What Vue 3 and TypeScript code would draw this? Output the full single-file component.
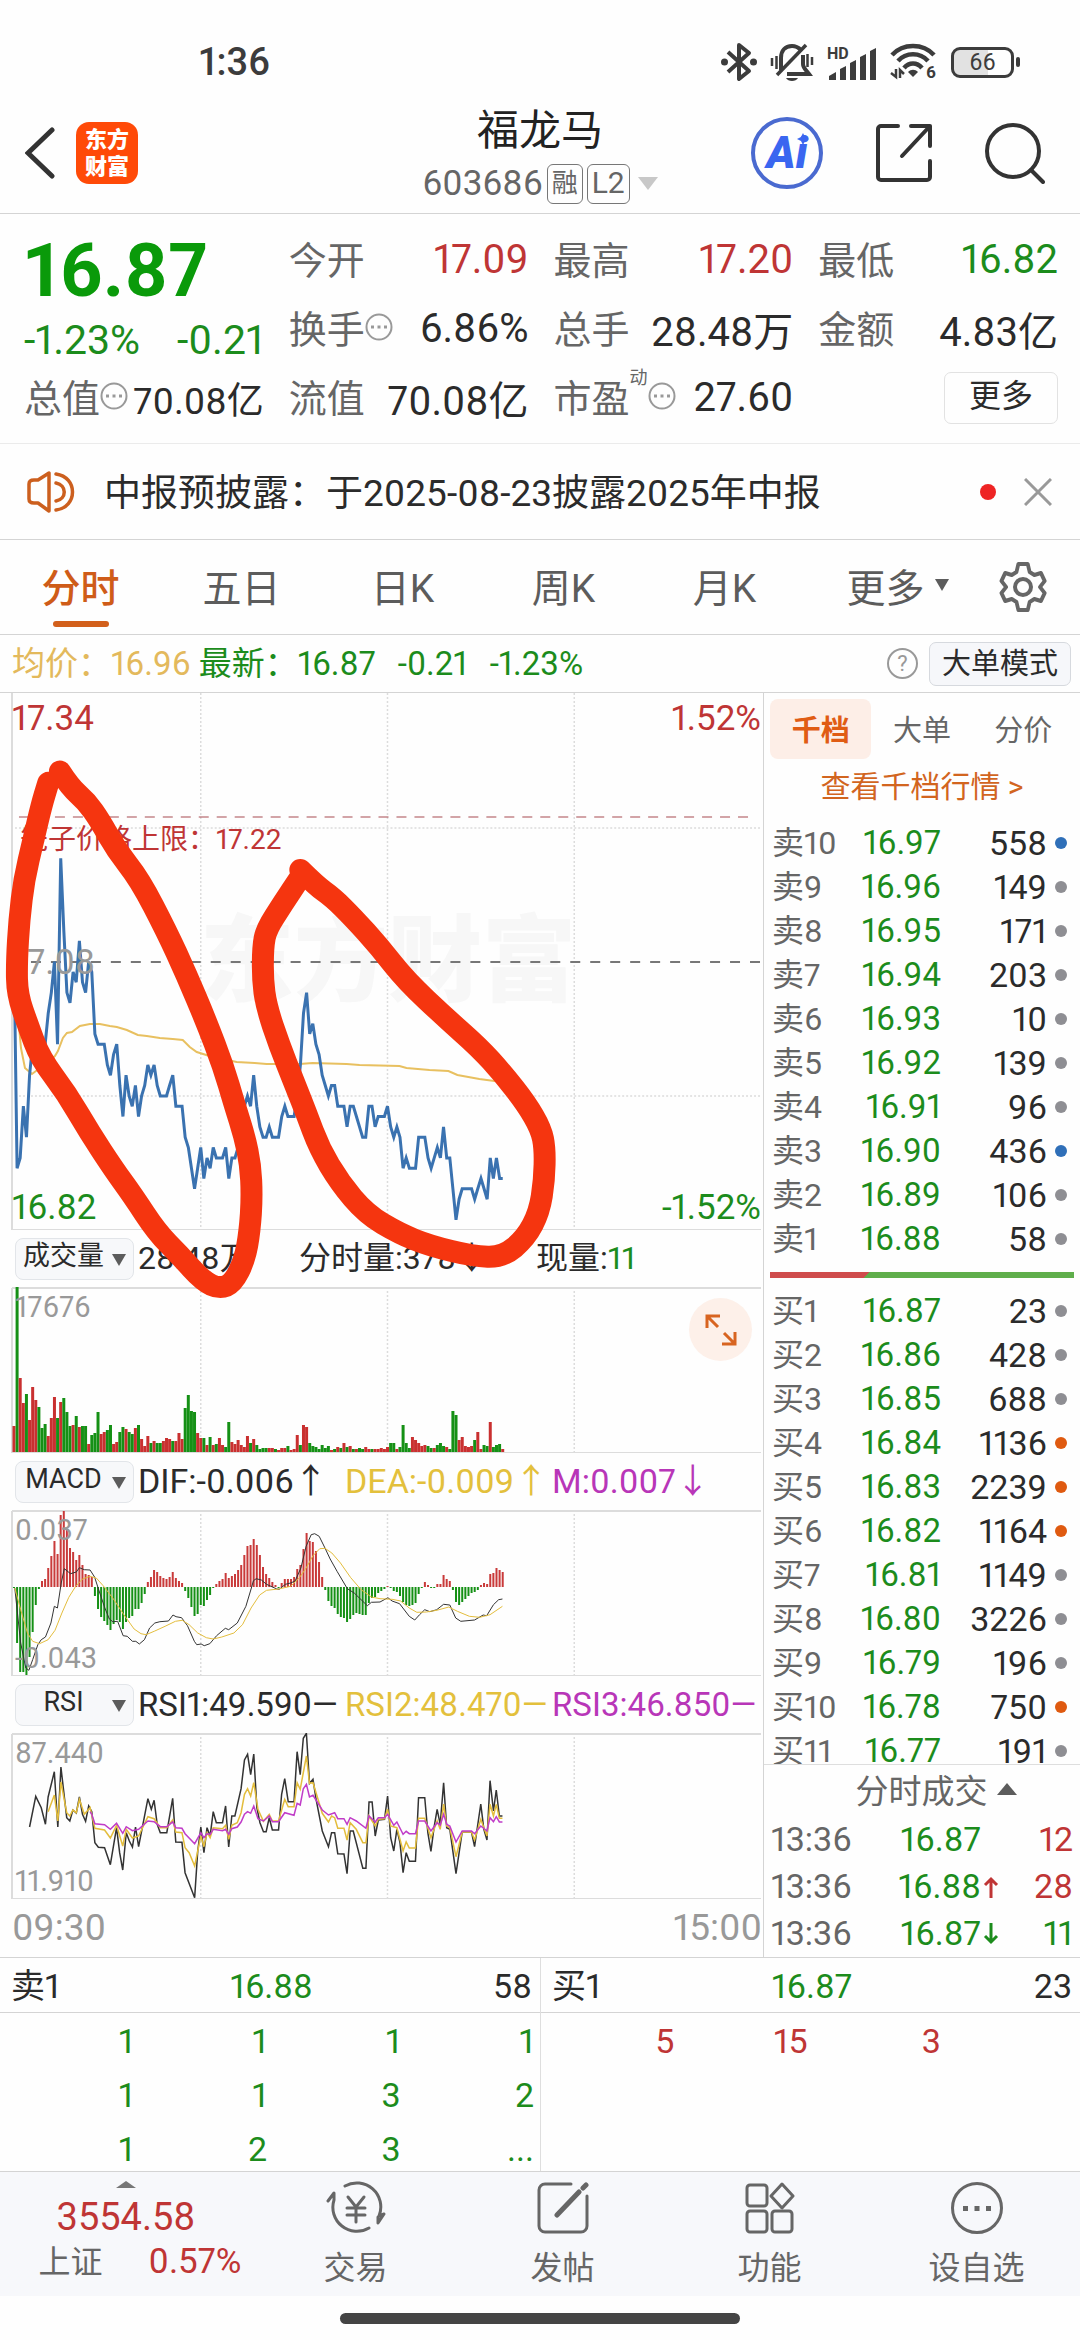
<script setup lang="ts">
import { ref } from 'vue'

type Level = { name: string; price: string; volume: number; tone: 'blue' | 'gray' | 'orange' }

const MINUTE_WIDTH = 3.117
const SESSION_START = 14
const minuteX = (minute: number) => SESSION_START + minute * MINUTE_WIDTH

const activeTab = ref('分时')
const tabs = ['分时', '五日', '日K', '周K', '月K']
const bookTabs = ['千档', '大单', '分价']
const activeBookTab = ref('千档')

const level = (side: string, index: number, cents: number, volume: number, tone: Level['tone'] = 'gray'): Level => ({
  name: `${side}${index}`,
  price: (cents / 100).toFixed(2),
  volume,
  tone,
})

const askVolumes = [558, 149, 171, 203, 10, 139, 96, 436, 106, 58]
const asks = askVolumes.map((v, i) => level('卖', 10 - i, 1697 - i, v, v === 558 || v === 436 ? 'blue' : 'gray'))
const bidVolumes = [23, 428, 688, 1136, 2239, 1164, 1149, 3226, 196, 750, 191]
const bigBids = [1136, 2239, 1164, 750]
const bids = bidVolumes.map((v, i) => level('买', i + 1, 1687 - i, v, bigBids.includes(v) ? 'orange' : 'gray'))

const trades = [
  { time: '13:36', price: '16.87', dir: '', volume: 12, side: 'up' },
  { time: '13:36', price: '16.88', dir: 'up', volume: 28, side: 'up' },
  { time: '13:36', price: '16.87', dir: 'down', volume: 11, side: 'down' },
]

const sellQueue = ['1', '1', '1', '1', '1', '1', '3', '2', '1', '2', '3', '...']
const buyQueue = ['5', '15', '3']

/* Minute closes, in cents */
const closes = [
  1709, 1688, 1689, 1694, 1691, 1697, 1700, 1700, 1699, 1698, 1700, 1703, 1705, 1708, 1700, 1718, 1711, 1705, 1704, 1707,
  1706, 1710, 1706, 1705, 1708, 1707, 1701, 1700, 1700, 1700, 1698, 1697, 1699, 1700, 1696, 1693, 1697, 1695, 1694, 1696,
  1693, 1695, 1696, 1698, 1697, 1698, 1696, 1695, 1695, 1695, 1696, 1697, 1694, 1694, 1694, 1691, 1690, 1688, 1686, 1688,
  1690, 1687, 1689, 1688, 1690, 1689, 1689, 1689, 1690, 1687, 1689, 1689, 1690, 1692, 1694, 1695, 1694, 1697, 1694, 1692,
  1691, 1691, 1692, 1691, 1691, 1691, 1693, 1694, 1693, 1693, 1693, 1695, 1698, 1703, 1705, 1701, 1702, 1700, 1699, 1697,
  1696, 1695, 1696, 1696, 1694, 1694, 1694, 1692, 1694, 1694, 1693, 1692, 1691, 1691, 1694, 1694, 1692, 1693, 1693, 1693,
  1694, 1692, 1691, 1692, 1691, 1688, 1689, 1688, 1688, 1688, 1691, 1691, 1691, 1689, 1688, 1689, 1690, 1689, 1692, 1689,
  1689, 1686, 1683, 1685, 1686, 1686, 1686, 1686, 1685, 1686, 1687, 1686, 1685, 1689, 1687, 1689, 1687, 1687,
]
const priceLine = closes.map((c, i) => `${minuteX(i).toFixed(1)},${((1734 - c) * 10.33).toFixed(1)}`).join(' ')

const averageLine =
  '16,290 19,333 21,355 25,375 32,381 40,375 55,363 58,358 63,345 67,340 72,339 80,333 90,331 100,331 110,333 117,334 127,337 138,342 147,343 160,345 173,346 183,347 190,354 197,359 213,364 237,369 255,370 267,371 300,371 313,370 347,371 360,372 400,373 407,375 430,377 449,378 458,382 480,386 495,388 503,389'

const volumeData =
  '26r 165g 74r 49r 58g 32r 65r 52r 45g 24g 28g 16r 34r 55r 34g 50r 54g 40g 26g 27r 36g 25r 26g 26g 8r 17g 19g 40g 18r 20r 22g 27g 8r 10r 20g 25g 23r 20g 18g 24r 27g 13r 6r 16r 9g 11r 9g 9g 11r 14r 13r 11g 11r 19r 13r 44g 57g 41g 40g 19r 14r 14g 7r 15g 7r 8g 14r 7r 5g 30g 10r 8r 12r 7r 5r 16r 9g 13r 7g 3g 4g 4g 4r 4r 3g 2r 4r 4r 6g 2r 3r 17r 7g 27r 25r 9g 6g 5g 3g 7g 4g 6g 2r 3g 5r 4g 9r 5g 6r 3g 3r 4g 3g 5r 3r 3g 3r 3r 4r 3r 5r 9g 9g 3r 5g 27g 9g 4g 15r 12r 9r 6r 7r 6g 4g 4r 7g 9g 6g 5r 3g 41g 37g 12r 15r 6r 5r 6r 12g 20r 3r 7g 6g 30r 5g 7g 8g 3r'
const volumeBars = volumeData.split(' ').map((entry, i) => {
  const height = parseInt(entry)
  return { x: minuteX(i) - 1.5, y: 165 - height, height, fill: entry.endsWith('g') ? '#159015' : '#c93030' }
})

const macdData = [
  0, -56, -85, -85, -88, -70, -45, -18, -2, 6, 8, 19, 31, 46, 33, 72, 76, 57, 39, 35, 27, 32, 22, 13, 12, 10, -9, -22, -30,
  -34, -38, -43, -37, -33, -35, -42, -35, -31, -29, -22, -22, -16, -7, 5, 10, 17, 15, 11, 9, 8, 10, 15, 9, 6, 4, -4, -11,
  -20, -29, -27, -18, -19, -13, -8, 0, 3, 6, 8, 14, 9, 11, 13, 17, 22, 32, 41, 42, 48, 42, 32, 20, 13, 9, 5, 2, 0, 4, 8, 8,
  8, 10, 18, 22, 38, 54, 46, 45, 36, 25, 10, -3, -14, -19, -21, -27, -30, -31, -35, -32, -28, -26, -27, -28, -28, -16,
  -11, -10, -6, -4, -2, 1, 0, -4, -5, -9, -15, -18, -19, -18, -16, -7, 0, 5, 2, 0, 0, 3, 3, 12, 8, 6, -3, -15, -18, -15,
  -12, -9, -6, -5, -3, 2, 4, 3, 13, 14, 19, 17, 15,
]
const macdBars = macdData.map((v, i) => ({
  x: minuteX(i) - 1,
  y: v > 0 ? 77 - v : 77,
  height: Math.max(Math.abs(v), 1),
  fill: v > 0 ? '#c93a3a' : '#159015',
}))

/* Curves are kept on a fine integer grid and scaled down to panel units */
const scaled = (points: string, kx: number, ky: number, top: number) =>
  points.split(' ').map((pair) => {
    const [x, y] = pair.split(',').map(Number)
    return [x / kx, (y - top) / ky] as [number, number]
  })
const polyline = (points: string, top: number) =>
  scaled(points, 2.904, 3, top).map(([x, y]) => `${x.toFixed(1)},${y.toFixed(1)}`).join(' ')

const difLine = polyline(
  '43,265 60,430 75,505 84,512 95,480 110,435 120,420 132,412 148,370 158,320 167,325 178,250 187,207 200,218 205,222 222,217 231,204 245,210 262,211 275,232 290,280 305,325 318,358 328,366 342,365 358,408 370,410 385,425 395,425 405,433 420,420 435,385 450,370 465,366 490,364 503,346 512,351 528,354 545,378 565,425 572,435 585,433 594,438 610,432 630,408 655,386 665,390 690,370 715,320 730,268 737,243 745,237 760,241 775,254 805,268 812,269 830,254 845,250 858,244 875,205 890,140 905,105 915,102 928,110 945,145 960,178 980,215 1010,267 1030,280 1068,318 1080,308 1105,307 1128,294 1140,304 1162,312 1190,350 1206,361 1220,345 1235,330 1250,336 1270,330 1290,314 1308,316 1325,355 1340,365 1380,361 1405,346 1415,348 1435,315 1450,300 1461,298',
  31,
)
const deaLine = polyline(
  '43,265 60,330 80,400 95,425 115,432 140,420 160,392 180,340 200,293 220,260 240,238 262,230 280,235 300,258 330,298 360,345 390,388 410,402 425,405 450,394 480,380 510,365 530,362 550,375 575,400 600,414 620,418 645,412 680,400 705,375 730,325 755,286 775,272 810,268 845,260 870,235 890,205 910,168 930,147 945,146 965,160 990,190 1020,234 1050,270 1080,292 1105,297 1140,299 1165,304 1190,325 1212,338 1240,337 1270,332 1305,322 1330,335 1365,350 1395,353 1425,345 1461,320',
  31,
)
const rsi1 = polyline(
  '86,983 104,891 120,925 132,975 140,893 158,817 168,983 177,803 194,955 203,965 212,932 222,941 231,893 240,945 249,966 258,920 267,937 276,1030 286,1044 304,1045 321,1096 339,985 348,1060 357,1112 367,1000 376,1025 385,1043 394,983 403,1042 430,898 440,930 448,903 457,975 466,1000 485,1000 502,897 511,1028 529,1029 538,1120 566,1195 575,1055 584,983 593,1060 602,985 611,1010 620,937 629,970 647,970 656,920 665,1043 674,950 683,950 701,868 711,782 720,765 729,826 738,764 747,925 756,970 766,997 774,997 783,955 792,992 810,992 819,885 828,838 838,907 855,907 864,757 873,826 882,717 891,702 900,852 910,840 919,900 937,995 955,1042 964,1000 973,1000 982,1063 1000,1064 1009,1123 1018,995 1027,995 1055,1107 1064,1107 1073,908 1082,908 1091,1010 1100,962 1118,960 1127,890 1136,1015 1145,1055 1154,990 1163,1030 1172,1120 1181,1060 1190,1086 1208,1086 1217,895 1235,895 1244,1000 1253,1056 1262,985 1271,930 1280,975 1290,850 1299,985 1308,990 1326,1123 1344,998 1371,998 1380,1042 1398,914 1407,990 1416,1022 1425,844 1435,935 1443,872 1452,950 1461,950',
  701,
)
const rsi2 = polyline(
  '140,937 158,887 168,965 177,848 194,940 203,950 212,932 222,940 231,900 245,945 262,925 276,987 304,992 321,1016 339,978 357,1040 367,990 385,1016 403,1010 430,952 448,958 466,985 485,985 502,962 511,998 529,1000 538,1045 550,1060 566,1100 584,1010 593,1042 602,1000 611,1015 620,985 647,988 656,978 665,1020 674,978 690,970 701,940 711,885 720,868 729,890 738,850 750,930 766,966 783,945 792,965 810,965 828,900 838,922 855,922 864,850 873,870 891,770 900,852 910,850 937,942 955,968 964,950 973,955 982,987 1000,987 1009,1022 1018,970 1036,990 1055,1030 1064,1030 1073,950 1091,980 1100,960 1118,958 1127,930 1136,980 1154,985 1172,1055 1181,1028 1190,1046 1208,1046 1217,957 1235,957 1253,1015 1271,965 1280,990 1290,914 1299,980 1308,985 1326,1072 1344,998 1371,998 1380,1022 1398,960 1416,1010 1425,915 1435,950 1443,915 1452,957 1461,957',
  701,
)
const rsi3 = polyline(
  '262,937 267,945 276,973 304,976 321,990 339,972 357,1002 367,982 385,994 403,990 430,965 448,967 466,982 485,982 502,968 511,985 529,987 538,1003 566,1033 584,1000 593,1015 602,1003 611,1005 620,990 647,994 656,990 665,1005 674,988 690,983 701,968 711,945 720,937 729,942 738,920 750,958 766,965 783,950 792,967 810,967 828,940 855,948 864,912 873,917 882,868 891,855 900,893 910,888 937,932 955,947 973,940 982,958 1000,958 1009,975 1018,955 1036,965 1064,987 1073,950 1091,968 1100,955 1118,955 1127,945 1145,978 1154,968 1172,1005 1181,996 1190,1003 1208,1003 1217,965 1235,965 1253,995 1271,970 1280,978 1290,945 1299,975 1308,980 1326,1028 1344,995 1371,995 1380,1003 1398,980 1416,995 1425,955 1435,967 1443,952 1452,968 1461,968',
  701,
)

/* Freehand marker strokes, smoothed through the midpoints of their samples */
const marker = (points: string) => {
  const p = scaled(points, 3, 2.529, 7.6)
  let d = `M${p[0][0].toFixed(1)} ${p[0][1].toFixed(1)}`
  for (let i = 1; i < p.length - 1; i++) {
    const mx = (p[i][0] + p[i + 1][0]) / 2
    const my = (p[i][1] + p[i + 1][1]) / 2
    d += `Q${p[i][0].toFixed(1)} ${p[i][1].toFixed(1)} ${mx.toFixed(1)} ${my.toFixed(1)}`
  }
  const last = p[p.length - 1]
  return `${d}L${last[0].toFixed(1)} ${last[1].toFixed(1)}`
}
const markers = [
  marker(
    '180,206 210,245 260,282 300,330 350,405 420,480 500,610 560,720 620,840 670,950 705,1050 735,1130 752,1200 757,1280 750,1370 735,1440 700,1500 660,1514 610,1495 540,1430 470,1370 400,1280 340,1210 270,1120 200,1020 120,930 85,850 52,770 50,690 58,580 72,480 100,380 125,290 145,235',
  ),
  marker(
    '902,455 950,495 1000,525 1060,575 1140,650 1220,735 1340,830 1440,905 1510,970 1580,1045 1625,1110 1637,1160 1635,1240 1620,1320 1580,1385 1510,1435 1420,1432 1290,1405 1200,1375 1100,1325 1020,1245 960,1160 920,1070 880,985 840,900 800,800 789,730 790,650 800,605 850,540 905,470',
  ),
]
</script>

<template>
  <div class="screen">
    <div class="status">
      <span class="clock">1:36</span>
      <div class="status-icons">
        <svg width="36" height="40" viewBox="0 0 36 40" fill="none" stroke="#3c3c3c" stroke-width="4">
          <path d="M7 10 28 29 18 37V3l10 8L7 30" stroke-linejoin="round" />
          <circle cx="3.500" cy="20" r="3.500" fill="#3c3c3c" stroke="none" />
          <circle cx="32.500" cy="20" r="3.500" fill="#3c3c3c" stroke="none" />
        </svg>
        <svg width="44" height="40" viewBox="0 0 44 40" fill="none" stroke="#3c3c3c">
          <path d="M11 28V16c0-7 4-12 11-12 4 0 7 2 9 4M33 13v9c0 4 3 6 6 10H17" stroke-width="4" />
          <path d="M7 33 36 3" stroke-width="3.500" />
          <path d="M16 36h12c-2 4-10 4-12 0z" fill="#3c3c3c" stroke="none" />
          <path d="M2 16v8M6.500 14v13M37.500 12v13M42 15v8" stroke-width="2.500" />
        </svg>
        <svg width="50" height="40" viewBox="0 -4 50 40">
          <text x="0" y="13" font-size="16" font-weight="700" fill="#3c3c3c">HD</text>
          <path d="M2 34v-4l7-4v8zM13 34V23l6-3v14zM23 34V17l6-3v20zM33 34V11l6-3v26zM43 34V5l6-3v32z" fill="#3c3c3c" />
        </svg>
        <svg width="48" height="42" viewBox="0 -1 48 42" fill="none" stroke="#3c3c3c" stroke-width="4.500">
          <path d="M2 13C13 1 33 1 44 13M8 19c8-9 22-9 30 0M14 26c5-6 13-6 18 0" />
          <path d="M18 30c3-3 7-3 10 0l-5 5z" fill="#3c3c3c" stroke="none" />
          <path d="M1 31l5 4v-8M10 36v-8l4 4" stroke-width="2.500" />
          <text x="36" y="36" font-size="17" font-weight="700" fill="#3c3c3c" stroke="none">6</text>
        </svg>
        <div class="battery"><span>66</span></div>
      </div>
    </div>

    <header class="head">
      <div class="head-side">
        <button class="plain" aria-label="返回">
          <svg width="30" height="52" viewBox="0 0 30 52" fill="none" stroke="#333" stroke-width="5" stroke-linecap="round">
            <path d="M27 3 3 26l24 23" />
          </svg>
        </button>
        <div class="logo"><span>东方</span><span>财富</span></div>
      </div>
      <div class="title">
        <h1>福龙马</h1>
        <div class="code">
          603686<i>融</i><i>L2</i>
          <svg width="20" height="13" viewBox="0 0 20 13"><path d="M0 0h20L10 13z" fill="#c8c8c8" /></svg>
        </div>
      </div>
      <div class="head-side actions">
        <button class="ai" aria-label="AI">
          Ai
          <svg width="12" height="12" viewBox="0 0 12 12"><path d="M6 0l2 4 4 2-4 2-2 4-2-4-4-2 4-2z" fill="#3a66f0" /></svg>
        </button>
        <button class="plain" aria-label="分享">
          <svg width="58" height="60" viewBox="0 0 58 60" fill="none" stroke="#333" stroke-width="4" stroke-linecap="round" stroke-linejoin="round">
            <path d="M23 3H6a3 3 0 0 0-3 3v48a3 3 0 0 0 3 3h46a3 3 0 0 0 3-3V38M36 3h19v20M55 3 27 33" />
          </svg>
        </button>
        <button class="plain" aria-label="搜索">
          <svg width="60" height="62" viewBox="0 0 60 62" fill="none" stroke="#333" stroke-width="4" stroke-linecap="round">
            <circle cx="28" cy="29" r="26" />
            <path d="m46 48 12 12" />
          </svg>
        </button>
      </div>
    </header>

    <section class="stats">
      <div class="quote">
        <strong>16.87</strong>
        <div class="change"><span>-1.23%</span><span>-0.21</span></div>
        <div class="stat tight">
          <span class="label">总值<svg width="28" height="28" viewBox="0 0 28 28"><circle cx="14" cy="14" r="12.500" fill="none" stroke="#999" stroke-width="2" /><path d="M6 12.500h3v3H6zM12.500 12.500h3v3h-3zM19 12.500h3v3h-3z" fill="#999" /></svg></span>
          <b>70.08亿</b>
        </div>
      </div>
      <div class="stat"><span class="label">今开</span><b class="up">17.09</b></div>
      <div class="stat"><span class="label">最高</span><b class="up">17.20</b></div>
      <div class="stat"><span class="label">最低</span><b class="down">16.82</b></div>
      <div class="stat">
        <span class="label">换手<svg width="28" height="28" viewBox="0 0 28 28"><circle cx="14" cy="14" r="12.500" fill="none" stroke="#999" stroke-width="2" /><path d="M6 12.500h3v3H6zM12.500 12.500h3v3h-3zM19 12.500h3v3h-3z" fill="#999" /></svg></span>
        <b>6.86%</b>
      </div>
      <div class="stat"><span class="label">总手</span><b>28.48万</b></div>
      <div class="stat"><span class="label">金额</span><b>4.83亿</b></div>
      <div class="stat"><span class="label">流值</span><b>70.08亿</b></div>
      <div class="stat">
        <span class="label">市盈<sup>动</sup><svg width="28" height="28" viewBox="0 0 28 28"><circle cx="14" cy="14" r="12.500" fill="none" stroke="#999" stroke-width="2" /><path d="M6 12.500h3v3H6zM12.500 12.500h3v3h-3zM19 12.500h3v3h-3z" fill="#999" /></svg></span>
        <b>27.60</b>
      </div>
      <div class="stat last"><button class="more">更多</button></div>
    </section>

    <section class="notice">
      <svg width="48" height="42" viewBox="0 0 48 42" fill="none" stroke="#cc5f1e" stroke-width="3.500" stroke-linejoin="round">
        <path d="M2 13c0-3 2-4 5-4h4L22 2v38l-11-8H7c-3 0-5-1-5-4z" />
        <path d="M29 3c22 3 22 33 0 36M29 12c11 2 11 16 0 18" stroke-linecap="round" />
      </svg>
      <a href="#">中报预披露：于2025-08-23披露2025年中报</a>
      <span class="unread"></span>
      <button class="plain" aria-label="关闭">
        <svg width="28" height="28" viewBox="0 0 28 28" stroke="#999" stroke-width="3"><path d="M1 1l26 26M27 1 1 27" /></svg>
      </button>
    </section>

    <nav class="tabs">
      <button v-for="t in tabs" :key="t" :class="{ on: t === activeTab }" @click="activeTab = t">{{ t }}</button>
      <button>
        更多<svg width="14" height="12" viewBox="0 0 14 12"><path d="M0 0h14L7 12z" fill="#5c5c5c" /></svg>
      </button>
      <button class="gear" aria-label="设置">
        <svg width="48" height="50" viewBox="0 0 48 50" fill="none" stroke="#666" stroke-width="4" stroke-linejoin="round">
          <path d="M19 2h10l2 8 5 3 7-2 4 8-5 6 5 6-4 8-7-2-5 3-2 8H19l-2-8-5-3-7 2-4-8 5-6-5-6 4-8 7 2 5-3z" transform="translate(1.500 0) scale(.94 1)" />
          <circle cx="24" cy="25" r="8" />
        </svg>
      </button>
    </nav>

    <section class="info">
      <span class="avg">均价：16.96</span>
      <span class="down">最新：16.87</span>
      <span class="down delta">-0.21</span>
      <span class="down delta">-1.23%</span>
      <button class="help" aria-label="说明">?</button>
      <button class="mode">大单模式</button>
    </section>

    <main class="main">
      <div class="charts">
        <div class="panel price">
          <span class="watermark">东方财富</span>
          <svg viewBox="0 0 764 537" preserveAspectRatio="none">
            <path d="M201 0v537M388 0v537M575 0v537M11 135h751M11 403h751" class="dots" />
            <path d="M12 0v537h750" class="frame" />
            <path d="M19 124h730" stroke="#a84a50" stroke-width="1" stroke-dasharray="10 8" />
            <path d="M11 269h751" stroke="#777" stroke-width="2" stroke-dasharray="10 10" />
            <polyline :points="averageLine" fill="none" stroke="#e8c060" stroke-width="2" />
            <polyline :points="priceLine" fill="none" stroke="#3a72b0" stroke-width="3" />
          </svg>
          <span class="tag tl up">17.34</span>
          <span class="tag tr up">1.52%</span>
          <span class="tag cage up">笼子价格上限：17.22</span>
          <span class="tag mid">17.08</span>
          <span class="tag bl down">16.82</span>
          <span class="tag br down">-1.52%</span>
        </div>

        <div class="bar volume-bar">
          <label class="pick"><select aria-label="指标一"><option>成交量</option></select></label>
          <span>28.48万</span><span>分时量:378↓</span><span>现量:<em class="down">11</em></span>
        </div>
        <div class="panel">
          <svg viewBox="0 0 764 166" preserveAspectRatio="none">
            <path d="M201 0v166M388 0v166M575 0v166" class="dots" />
            <path d="M12 1v165h750M12 1h750" class="frame" />
            <rect v-for="(b, i) in volumeBars" :key="i" :x="b.x" :y="b.y" width="3" :height="b.height" :fill="b.fill" />
          </svg>
          <span class="scale top">17676</span>
          <button class="expand" aria-label="全屏">
            <svg width="32" height="32" viewBox="0 0 32 32" fill="none" stroke="#d86420" stroke-width="3">
              <path d="M2 14V2h13M2 2l11 11M30 18v12H17M30 30 19 19" />
            </svg>
          </button>
        </div>

        <div class="bar macd-bar">
          <label class="pick"><select aria-label="指标二"><option>MACD</option></select></label>
          <span>DIF:-0.006↑</span><span class="yellow">DEA:-0.009↑</span><span class="purple">M:0.007↓</span>
        </div>
        <div class="panel">
          <svg viewBox="0 0 764 166" preserveAspectRatio="none">
            <path d="M201 0v166M388 0v166M575 0v166" class="dots" />
            <path d="M12 1v165h750M12 1h750" class="frame" />
            <rect v-for="(b, i) in macdBars" :key="i" :x="b.x" :y="b.y" width="2" :height="b.height" :fill="b.fill" />
            <polyline :points="difLine" fill="none" stroke="#333" stroke-width="1" />
            <polyline :points="deaLine" fill="none" stroke="#e3bd3c" stroke-width="1" />
          </svg>
          <span class="scale top">0.037</span>
          <span class="scale bottom">-0.043</span>
        </div>

        <div class="bar">
          <label class="pick"><select aria-label="指标三"><option>RSI</option></select></label>
          <span>RSI1:49.590—</span><span class="yellow">RSI2:48.470—</span><span class="purple">RSI3:46.850—</span>
        </div>
        <div class="panel">
          <svg viewBox="0 0 764 166" preserveAspectRatio="none">
            <path d="M201 0v166M388 0v166M575 0v166" class="dots" />
            <path d="M12 1v165h750M12 1h750" class="frame" />
            <polyline :points="rsi1" fill="none" stroke="#333" stroke-width="1.500" />
            <polyline :points="rsi2" fill="none" stroke="#e3bd3c" stroke-width="1.500" />
            <polyline :points="rsi3" fill="none" stroke="#c03cc8" stroke-width="1.500" />
          </svg>
          <span class="scale top">87.440</span>
          <span class="scale bottom">11.910</span>
        </div>
        <div class="axis"><span>09:30</span><span>15:00</span></div>

        <svg class="ink" viewBox="0 0 764 1264" preserveAspectRatio="none">
          <path v-for="m in markers" :key="m" :d="m" />
        </svg>
      </div>

      <aside class="book">
        <div class="book-tabs">
          <button v-for="t in bookTabs" :key="t" :class="{ on: t === activeBookTab }" @click="activeBookTab = t">{{ t }}</button>
        </div>
        <a class="book-link" href="#">查看千档行情 &gt;</a>
        <table class="levels">
          <tbody>
            <tr v-for="l in asks" :key="l.name">
              <th scope="row">{{ l.name }}</th>
              <td class="down">{{ l.price }}</td>
              <td>{{ l.volume }}</td>
              <td><span class="dot" :class="l.tone"></span></td>
            </tr>
          </tbody>
        </table>
        <div class="ratio"></div>
        <div class="clip">
          <table class="levels">
            <tbody>
              <tr v-for="l in bids" :key="l.name">
                <th scope="row">{{ l.name }}</th>
                <td class="down">{{ l.price }}</td>
                <td>{{ l.volume }}</td>
                <td><span class="dot" :class="l.tone"></span></td>
              </tr>
            </tbody>
          </table>
        </div>
        <button class="ticks-head">
          分时成交<svg width="20" height="12" viewBox="0 0 20 12"><path d="M0 12h20L10 0z" fill="#5c5c5c" /></svg>
        </button>
        <table class="ticks">
          <tbody>
            <tr v-for="(t, i) in trades" :key="i">
              <th scope="row">{{ t.time }}</th>
              <td class="down">{{ t.price }}</td>
              <td>
                <svg v-if="t.dir" :class="t.dir" width="16" height="22" viewBox="0 0 16 22" fill="none" stroke="currentColor" stroke-width="3">
                  <path :d="t.dir === 'up' ? 'M8 22V3M2 9l6-6 6 6' : 'M8 0v19M2 13l6 6 6-6'" />
                </svg>
              </td>
              <td :class="t.side">{{ t.volume }}</td>
            </tr>
          </tbody>
        </table>
      </aside>
    </main>

    <section class="queues">
      <div class="queue">
        <div class="queue-head"><span>卖1</span><span class="down">16.88</span><span>58</span></div>
        <div class="orders down"><span v-for="(q, i) in sellQueue" :key="i">{{ q }}</span></div>
      </div>
      <div class="queue">
        <div class="queue-head"><span>买1</span><span class="down">16.87</span><span>23</span></div>
        <div class="orders up"><span v-for="(q, i) in buyQueue" :key="i">{{ q }}</span></div>
      </div>
    </section>

    <footer class="dock">
      <button class="index">
        <svg width="20" height="7" viewBox="0 0 20 7"><path d="M0 7h20L10 0z" fill="#777" /></svg>
        <span class="up points">3554.58</span>
        <span class="row"><span>上证</span><span class="up rate">0.57%</span></span>
      </button>
      <button>
        <svg width="60" height="54" viewBox="0 0 60 54" fill="none" stroke="#666" stroke-width="3" stroke-linecap="round" stroke-linejoin="round">
          <path d="M19 5A24 24 0 0 1 53 35M53 35l5-2-6 9v-6M43 47A24 24 0 0 1 8 19M8 19v-7l-6 8" />
          <path d="m22 16 8 10 8-10M30 26v15M21 27h18M21 34h18" />
        </svg>
        <span>交易</span>
      </button>
      <button>
        <svg width="52" height="54" viewBox="0 0 52 54" fill="none" stroke="#666" stroke-width="3" stroke-linecap="round">
          <path d="M34 3H8a6 6 0 0 0-6 6v36a6 6 0 0 0 6 6h36a6 6 0 0 0 6-6V15" />
          <path d="M20 34 42 11M46 7l3-3" stroke-width="5" />
        </svg>
        <span>发帖</span>
      </button>
      <button>
        <svg width="50" height="54" viewBox="0 0 50 54" fill="none" stroke="#666" stroke-width="3" stroke-linejoin="round">
          <rect x="2" y="4" width="20" height="21" rx="3" />
          <rect x="2" y="30" width="20" height="21" rx="3" />
          <rect x="27" y="30" width="20" height="21" rx="3" />
          <path d="m37 3 11 12-11 12-11-12z" />
        </svg>
        <span>功能</span>
      </button>
      <button>
        <svg width="54" height="54" viewBox="0 0 54 54" fill="none" stroke="#666" stroke-width="3">
          <circle cx="27" cy="27" r="24.500" />
          <path d="M13 25h5v5h-5zM24.500 25h5v5h-5zM36 25h5v5h-5z" fill="#666" stroke="none" />
        </svg>
        <span>设自选</span>
      </button>
    </footer>
    <div class="home"></div>
  </div>
</template>

<style>
body {
  background: #fefefe;
}
</style>

<style scoped>
.screen {
  font-family: Roboto, 'Noto Sans CJK SC', sans-serif;
  font-variant-numeric: proportional-nums;
  color: #2b2b2b;
  background: #fefefe;
}
button,
select {
  font: inherit;
  font-variant-numeric: inherit;
  color: inherit;
  background: none;
  border: 0;
  padding: 0;
}
a {
  color: inherit;
  text-decoration: none;
}
svg {
  display: block;
  flex: none;
}
.plain {
  display: block;
}
.up {
  color: #bf3535;
}
.down {
  color: #1c8c1c;
}
.yellow {
  color: #e3c03c;
}
.purple {
  color: #b836b8;
}

.status {
  display: flex;
  align-items: center;
  justify-content: space-between;
  height: 60px;
  padding: 32px 60px 0 199px;
}
.clock {
  font-size: 38px;
  font-weight: 500;
  color: #3c3c3c;
}
.status-icons {
  display: flex;
  align-items: center;
  gap: 13px;
}
.battery {
  position: relative;
  width: 57px;
  height: 25px;
  margin-right: 6px;
  border: 3px solid #3c3c3c;
  border-radius: 9px;
  background: linear-gradient(90deg, #e2e2e2 60%, #fefefe 60%) content-box;
  text-align: center;
  line-height: 26px;
  font-size: 23px;
  color: #3c3c3c;
}
.battery::after {
  content: '';
  position: absolute;
  right: -9px;
  top: 7px;
  width: 4px;
  height: 10px;
  border-radius: 2px;
  background: #3c3c3c;
}

.head {
  display: grid;
  grid-template-columns: 1fr auto 1fr;
  align-items: center;
  height: 121px;
  padding: 0 35px 0 25px;
  border-bottom: 1px solid #d4d4d4;
}
.head-side {
  display: flex;
  align-items: center;
  gap: 21px;
}
.actions {
  justify-content: flex-end;
  gap: 52px;
}
.logo {
  display: flex;
  flex-direction: column;
  justify-content: center;
  width: 62px;
  height: 62px;
  border-radius: 13px;
  background: #ff4a08;
  color: #fff;
  font-size: 22px;
  line-height: 27px;
  font-weight: 900;
  text-align: center;
}
.title {
  padding-top: 12px;
  margin-left: 10px;
  text-align: center;
}
h1 {
  margin: 0;
  font-size: 42px;
  line-height: 50px;
  font-weight: 400;
  color: #222;
}
.code {
  display: flex;
  align-items: center;
  justify-content: center;
  height: 56px;
  font-size: 35px;
  color: #666;
}
.code i {
  box-sizing: border-box;
  height: 40px;
  margin-left: 4px;
  padding: 0 4px;
  border: 1px solid #777;
  border-radius: 6px;
  font-style: normal;
  font-size: 26px;
  line-height: 36px;
}
.code i + i {
  font-size: 30px;
}
.code svg {
  margin-left: 8px;
}
.ai {
  position: relative;
  box-sizing: border-box;
  width: 72px;
  height: 72px;
  border: 4px solid #4a6ad0;
  border-radius: 50%;
  color: #3a66f0;
  font-size: 44px;
  line-height: 62px;
  font-weight: 900;
  font-style: italic;
}
.ai svg {
  position: absolute;
  right: 10px;
  top: 12px;
}

.stats {
  display: grid;
  grid-template-columns: repeat(4, 1fr);
  grid-auto-rows: 69px;
  column-gap: 25px;
  padding: 11px 22px 11px 24px;
  border-bottom: 1px solid #ebebeb;
}
.quote {
  grid-row: span 3;
}
.quote strong {
  display: block;
  height: 90px;
  font-size: 74px;
  line-height: 92px;
  font-weight: 700;
  color: #0a9a0a;
}
.change {
  display: flex;
  justify-content: space-between;
  height: 48px;
  font-size: 41px;
  line-height: 50px;
  color: #1c8c1c;
}
.stat {
  display: flex;
  align-items: center;
  justify-content: space-between;
  height: 69px;
  white-space: nowrap;
}
.stat b {
  font-size: 40px;
  font-weight: 400;
}
.tight b {
  font-size: 37px;
}
.label {
  display: flex;
  align-items: center;
  padding-bottom: 4px;
  font-size: 38px;
  color: #666;
}
.label sup {
  align-self: flex-start;
  font-size: 18px;
  line-height: 20px;
}
.last {
  justify-content: flex-end;
}
.more {
  width: 114px;
  height: 52px;
  padding-bottom: 4px;
  border: 1px solid #e2e2e2;
  border-radius: 7px;
  font-size: 32px;
  line-height: 44px;
}

.notice {
  display: flex;
  align-items: center;
  height: 95px;
  padding: 0 28px 0 27px;
  border-bottom: 1px solid #d4d4d4;
  font-size: 37px;
}
.notice a {
  flex: 1;
  margin-left: 29px;
  padding-bottom: 4px;
}
.unread {
  width: 16px;
  height: 16px;
  margin-right: 28px;
  border-radius: 50%;
  background: #ee2424;
}

.tabs {
  display: grid;
  grid-template-columns: repeat(5, 161fr) 185fr 90fr;
  height: 94px;
  border-bottom: 1px solid #d4d4d4;
  font-size: 39px;
  color: #5c5c5c;
}
.tabs button {
  position: relative;
  display: flex;
  align-items: center;
  justify-content: center;
  gap: 10px;
  padding-bottom: 4px;
}
.tabs .on {
  color: #cf5c18;
  font-weight: 500;
}
.tabs .on::after {
  content: '';
  position: absolute;
  bottom: 7px;
  width: 56px;
  height: 6px;
  border-radius: 3px;
  background: #d25f1b;
}
.tabs .gear {
  padding: 0 24px 0 0;
}

.info {
  display: flex;
  align-items: center;
  height: 57px;
  padding: 0 9px 0 12px;
  border-bottom: 1px solid #d4d4d4;
  font-size: 33px;
  line-height: 57px;
  white-space: nowrap;
}
.avg {
  color: #e3b95c;
  margin-right: 8px;
}
.delta {
  margin-left: 22px;
}
.help {
  width: 31px;
  height: 31px;
  margin-left: auto;
  border: 2px solid #999;
  border-radius: 50%;
  font-size: 22px;
  line-height: 26px;
  color: #999;
}
.mode {
  width: 142px;
  height: 44px;
  margin-left: 11px;
  border: 1px solid #d6d9de;
  border-radius: 7px;
  background: #f6f7fa;
  font-size: 29px;
  line-height: 40px;
}

.main {
  display: grid;
  grid-template-columns: 764fr 316fr;
  border-bottom: 1px solid #d4d4d4;
}
.charts {
  position: relative;
  box-sizing: border-box;
  border-right: 1px solid #d4d4d4;
}
.panel {
  position: relative;
  height: 166px;
}
.panel > svg {
  position: relative;
  width: 100%;
  height: 100%;
}
.price {
  height: 537px;
}
.dots {
  fill: none;
  stroke: #dcdcdc;
  stroke-width: 1.5px;
  stroke-dasharray: 2 2;
}
.frame {
  fill: none;
  stroke: #dcdcdc;
  stroke-width: 2px;
}
.watermark {
  position: absolute;
  left: 200px;
  top: 214px;
  font-size: 94px;
  line-height: 110px;
  font-weight: 900;
  color: #f7f7f7;
}
.tag {
  position: absolute;
  font-size: 35px;
  line-height: 40px;
}
.tl {
  left: 12px;
  top: 6px;
}
.tr {
  right: 2px;
  top: 6px;
}
.bl {
  left: 12px;
  bottom: 2px;
}
.br {
  right: 2px;
  bottom: 2px;
}
.mid {
  left: 12px;
  top: 250px;
  color: #999;
}
.cage {
  left: 20px;
  top: 127px;
  font-size: 28px;
}
.scale {
  position: absolute;
  left: 15px;
  font-size: 29px;
  line-height: 32px;
  color: #999;
}
.top {
  top: 4px;
}
.bottom {
  bottom: 2px;
}
.expand {
  position: absolute;
  right: 11px;
  top: 11px;
  display: flex;
  align-items: center;
  justify-content: center;
  width: 63px;
  height: 63px;
  border-radius: 50%;
  background: #fdf0e9;
}
.bar {
  display: grid;
  grid-template-columns: 119px 207px 207px 1fr;
  align-items: center;
  height: 57px;
  padding-left: 15px;
  font-size: 33px;
  line-height: 57px;
  white-space: nowrap;
}
.volume-bar {
  grid-template-columns: 119px 161px 237px 1fr;
  font-size: 32px;
}
.macd-bar {
  font-size: 34px;
}
.bar > span {
  padding-left: 4px;
}
.bar em {
  font-style: normal;
}
.pick {
  position: relative;
  display: block;
  height: 42px;
}
.pick::after {
  content: '';
  position: absolute;
  right: 8px;
  top: 16px;
  border: 7px solid transparent;
  border-top: 12px solid #5c5c5c;
  border-bottom: 0;
}
.pick select {
  display: block;
  appearance: none;
  box-sizing: border-box;
  width: 100%;
  height: 42px;
  padding: 0 22px 7px 0;
  border: 1px solid #e2e5e9;
  border-radius: 8px;
  background: #f7f8fa;
  font-size: 27px;
  line-height: 34px;
  text-align: center;
  text-align-last: center;
}
.axis {
  display: flex;
  justify-content: space-between;
  padding: 0 1px 0 12px;
  font-size: 37px;
  line-height: 58px;
  color: #999;
}
.ink {
  position: absolute;
  inset: 0;
  width: 100%;
  height: 100%;
  pointer-events: none;
}
.ink path {
  fill: none;
  stroke: #f5350f;
  stroke-width: 22px;
  stroke-linecap: round;
  stroke-linejoin: round;
}

.book {
  display: flex;
  flex-direction: column;
  padding-top: 6px;
}
.book-tabs {
  display: grid;
  grid-template-columns: repeat(3, 1fr);
  height: 60px;
  margin: 0 6px;
  font-size: 29px;
  color: #666;
}
.book-tabs button {
  padding-bottom: 3px;
}
.book-tabs .on {
  border-radius: 8px;
  background: #fdeee7;
  color: #e05c14;
  font-weight: 700;
}
.book-link {
  height: 62px;
  font-size: 30px;
  line-height: 56px;
  text-align: center;
  color: #d2651f;
}
table {
  border-collapse: collapse;
  table-layout: fixed;
  width: 100%;
}
th,
td {
  padding: 0;
  font-weight: 400;
  text-align: right;
  white-space: nowrap;
}
th {
  padding-left: 8px;
  text-align: left;
  color: #666;
}
.levels tr {
  height: 44px;
}
.levels th {
  width: 84px;
  font-size: 32px;
  line-height: 44px;
}
.levels td {
  font-size: 34px;
  line-height: 44px;
}
.levels td:nth-child(2) {
  width: 85px;
  font-size: 33px;
}
.levels td:last-child {
  width: 33px;
}
.dot {
  display: block;
  width: 12px;
  height: 12px;
  margin-left: 8px;
  border-radius: 50%;
}
.blue {
  background: #2f6fb8;
}
.gray {
  background: #8e8e93;
}
.orange {
  background: #df5a10;
}
.ratio {
  height: 6px;
  margin: 11px 6px;
  background: linear-gradient(135deg, #cf4c4c 32%, #5fae4b 32%);
}
.clip {
  height: 476px;
  overflow: hidden;
  border-bottom: 1px solid #dedede;
  box-sizing: border-box;
}
.ticks-head {
  display: flex;
  align-items: center;
  justify-content: center;
  gap: 9px;
  height: 51px;
  padding: 0 0 3px 28px;
  font-size: 33px;
  color: #666;
}
.ticks tr {
  height: 47px;
}
.ticks th,
.ticks td {
  font-size: 34px;
  line-height: 47px;
}
.ticks th {
  padding-left: 7px;
  width: 112px;
}
.ticks td:nth-child(2) {
  width: 98px;
}
.ticks td:nth-child(3) {
  width: 24px;
}
.ticks td:nth-child(3) svg {
  margin-left: 2px;
}
.ticks td:last-child {
  padding-right: 7px;
}

.queues {
  display: grid;
  grid-template-columns: 1fr 1fr;
  border-bottom: 1px solid #d4d4d4;
}
.queue + .queue {
  box-sizing: border-box;
  border-left: 1px solid #dedede;
}
.queue-head {
  display: grid;
  grid-template-columns: 1fr auto 1fr;
  height: 54px;
  padding: 0 8px 0 11px;
  border-bottom: 1px solid #d4d4d4;
  font-size: 34px;
  line-height: 57px;
}
.queue-head span:last-child {
  text-align: right;
}
.orders {
  display: grid;
  grid-template-columns: repeat(4, 1fr);
  row-gap: 10px;
  padding: 6px 6px 0 0;
  font-size: 34px;
  line-height: 44px;
  text-align: right;
}

.dock {
  display: grid;
  grid-template-columns: 252fr repeat(4, 207fr);
  height: 124px;
  background: #f7f8fb;
  font-size: 32px;
  color: #666;
}
.dock button {
  display: flex;
  flex-direction: column;
  align-items: center;
  padding-top: 9px;
  line-height: 40px;
}
.dock button > span {
  margin-top: 13px;
}
.dock .index > .points {
  margin-top: 6px;
  font-size: 38px;
  line-height: 46px;
}
.dock .index > .row {
  display: flex;
  gap: 46px;
  padding-left: 28px;
  margin-top: 2px;
}
.rate {
  font-size: 35px;
}
.home {
  width: 400px;
  height: 11px;
  margin: 17px auto 16px;
  border-radius: 6px;
  background: #444;
}
</style>
